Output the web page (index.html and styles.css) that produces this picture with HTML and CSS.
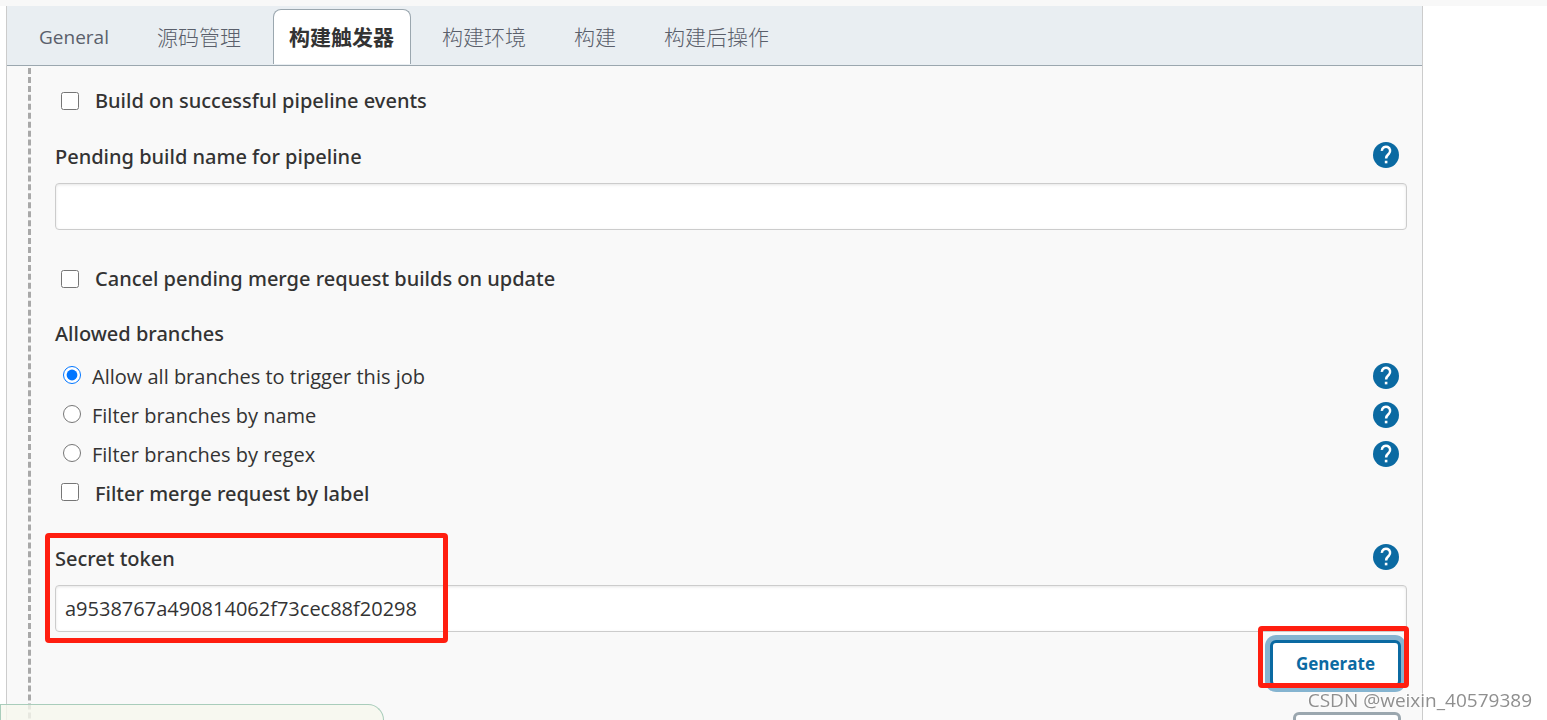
FILE: index.html
```html
<!DOCTYPE html>
<html lang="zh-CN">
<head>
  <meta charset="UTF-8">
  <meta name="viewport" content="width=device-width, initial-scale=1.0">
  <title>构建触发器</title>
  <link rel="stylesheet" href="styles.css">
</head>
<body>
  <svg class="sprite" aria-hidden="true">
    <symbol id="help" viewBox="0 0 24 24">
      <path d="M12 0a12 12 0 1 0 0 24 12 12 0 0 0 0-24z" fill="#0b6aa2"/>
      <path d="M8.2 8.2a3.8 3.8 0 1 1 6.4 2.7c-1.4 1.3-2.5 2-2.5 4.3" fill="none" stroke="#fff" stroke-width="2.3"/>
      <path d="M10.9 17.3h2.4v2.4h-2.4z" fill="#fff"/>
    </symbol>
  </svg>

  <main class="panel">
    <nav class="tabs">
      <a class="tab latin" href="#general">General</a>
      <a class="tab" href="#scm">源码管理</a>
      <a class="tab active" href="#triggers">构建触发器</a>
      <a class="tab" href="#env">构建环境</a>
      <a class="tab" href="#build">构建</a>
      <a class="tab" href="#post">构建后操作</a>
    </nav>

    <form class="config">
      <div class="row check">
        <input type="checkbox" id="pipelineEvents">
        <label for="pipelineEvents">Build on successful pipeline events</label>
      </div>

      <div class="field">
        <div class="row field-head">
          <label for="pendingName">Pending build name for pipeline</label>
          <a class="help" href="#help-pending" aria-label="Help"><svg><use href="#help"/></svg></a>
        </div>
        <input type="text" id="pendingName">
      </div>

      <div class="row check cancel">
        <input type="checkbox" id="cancelPending">
        <label for="cancelPending">Cancel pending merge request builds on update</label>
      </div>

      <div class="row heading">Allowed branches</div>
      <div class="row radio">
        <input type="radio" name="branches" id="branchAll" checked>
        <label for="branchAll">Allow all branches to trigger this job</label>
        <a class="help" href="#help-all" aria-label="Help"><svg><use href="#help"/></svg></a>
      </div>
      <div class="row radio">
        <input type="radio" name="branches" id="branchName">
        <label for="branchName">Filter branches by name</label>
        <a class="help" href="#help-name" aria-label="Help"><svg><use href="#help"/></svg></a>
      </div>
      <div class="row radio">
        <input type="radio" name="branches" id="branchRegex">
        <label for="branchRegex">Filter branches by regex</label>
        <a class="help" href="#help-regex" aria-label="Help"><svg><use href="#help"/></svg></a>
      </div>
      <div class="row check">
        <input type="checkbox" id="mergeLabel">
        <label for="mergeLabel">Filter merge request by label</label>
      </div>

      <div class="field secret">
        <div class="row field-head">
          <label for="secretToken">Secret token</label>
          <a class="help" href="#help-token" aria-label="Help"><svg><use href="#help"/></svg></a>
        </div>
        <input type="text" id="secretToken" value="a9538767a490814062f73cec88f20298">
        <span class="mark mark-token"></span>
      </div>

      <div class="buttons">
        <div class="generate">
          <button type="button" class="btn focused">Generate</button>
          <span class="mark mark-generate"></span>
        </div>
        <button type="button" class="btn plain" aria-label="Clear"></button>
      </div>
    </form>
  </main>

  <div class="save-bar"></div>
  <div class="watermark">CSDN @weixin_40579389</div>
</body>
</html>
```

FILE: styles.css
```css
* {
  box-sizing: border-box;
}

body {
  margin: 0;
  height: 100vh;
  overflow: hidden;
  border-top: 6px solid #f8f8f8;
  background: #fff;
  color: #333;
  font-family: "Open Sans", "Noto Sans CJK SC", sans-serif;
  font-size: 20px;
}

.sprite {
  display: none;
}

.panel {
  margin: 0 124px 0 6px;
  height: 100%;
  overflow: hidden;
  border: 1px solid #ccc;
  border-width: 0 1px;
  background: #f9f9f9;
}

/* tabs */
.tabs {
  display: flex;
  gap: 15px;
  height: 60px;
  padding: 3px 15px 1px;
  border-bottom: 1px solid #9ba7af;
  background: #e9eef2;
}

.tab {
  padding: 0 16px 0 15px;
  border: 1px solid transparent;
  border-bottom: 0;
  border-radius: 8px 8px 0 0;
  color: #5a5f6b;
  font-family: "Noto Sans CJK SC", sans-serif;
  font-size: 21px;
  font-weight: 300;
  line-height: 52px;
  text-decoration: none;
}

.tab.latin {
  padding: 0 16px;
  font-family: "Open Sans", sans-serif;
  font-size: 19px;
  font-weight: 400;
  line-height: 54px;
}

.tab.active {
  border-color: #9ba7af;
  background: #fff;
  color: #333;
  font-weight: 700;
}

/* form */
.config {
  margin: 2px 15px 0 21px;
  padding: 13px 0 40px 24px;
  border-left: 3px dashed #a9a9a9;
}

.row {
  display: flex;
  align-items: center;
  height: 39px;
}

.check,
.field-head,
.heading {
  font-family: "Noto Sans", sans-serif;
  font-weight: 500;
}

.row input {
  width: 18px;
  height: 18px;
  margin: 0 16px 0 6px;
}

.row.radio input {
  margin: 0 11px 4px 8px;
}

.radio + .check input {
  margin-bottom: 4px;
}

.help {
  width: 26px;
  height: 26px;
  margin: 0 8px 2px auto;
}

.help svg {
  display: block;
  width: 26px;
  height: 26px;
}

.field {
  position: relative;
  margin-top: 17px;
}

.field-head {
  height: 38px;
  margin-bottom: 8px;
}

.field input[type="text"] {
  display: block;
  width: 100%;
  height: 47px;
  padding: 0 9px;
  border: 1px solid #ccc;
  border-radius: 4px;
  background: #fff;
  box-shadow: inset 0 1px 3px rgba(0, 0, 0, 0.1);
  color: #333;
  font: inherit;
}

.cancel {
  margin-top: 29px;
}

.heading {
  margin: 16px 0 4px;
}

.secret {
  margin-top: 26px;
}

.buttons {
  display: flex;
  flex-direction: column;
  align-items: flex-end;
  gap: 25px;
  padding: 8px 6px 0 0;
}

.generate {
  position: relative;
}

.btn {
  display: block;
  height: 47px;
  padding: 0 23px;
  border: 3px solid #9ba7af;
  border-radius: 6px;
  background: #fff;
  color: #0b6aa2;
  font-family: inherit;
  font-size: 17px;
  font-weight: 700;
}

.btn.focused {
  border-color: #0b6aa2;
  box-shadow: 0 0 0 5px #85b4d0;
}

.btn.plain {
  min-width: 108px;
}

/* red callouts */
.mark {
  position: absolute;
  border: 5px solid #ff1e10;
  border-radius: 4px;
  pointer-events: none;
}

.mark-token {
  top: -6px;
  left: -10px;
  width: 403px;
  height: 110px;
}

.mark-generate {
  top: -14px;
  right: -8px;
  bottom: -1px;
  left: -12px;
}

.save-bar {
  position: fixed;
  left: 0;
  bottom: 0;
  width: 384px;
  height: 16px;
  border: 1px solid #a9cdbb;
  border-bottom: 0;
  border-radius: 0 16px 0 0;
  background: rgba(246, 248, 238, 0.8);
}

.watermark {
  position: fixed;
  right: 15px;
  bottom: 6px;
  color: #8f8f8f;
  font-size: 19px;
  line-height: 28px;
  text-shadow: -1px -1px 0 #fff;
}
```
